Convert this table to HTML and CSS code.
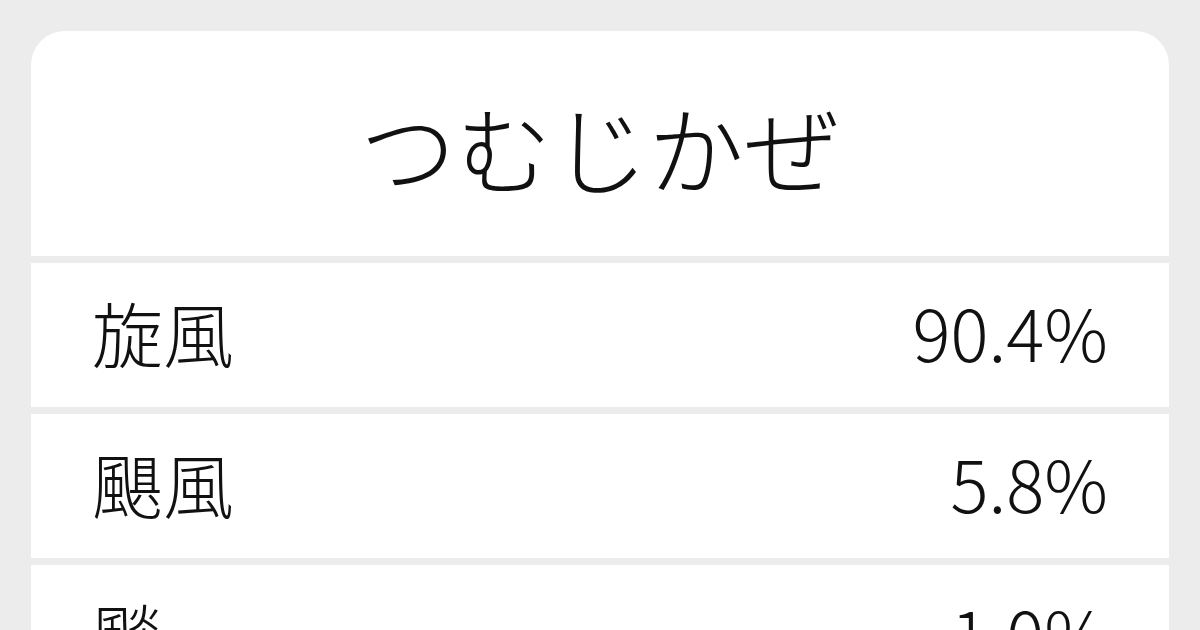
FILE: index.html
```html
<!DOCTYPE html>
<html lang="ja">
<head>
<meta charset="utf-8">
<title>つむじかぜ</title>
<link rel="stylesheet" href="styles.css">
</head>
<body>
<main class="card">
  <header class="title-box">
    <h1 class="title">つむじかぜ</h1>
  </header>
  <div class="row"><span class="word">旋風</span><span class="pct">90.4%</span></div>
  <div class="row"><span class="word">颶風</span><span class="pct">5.8%</span></div>
  <div class="row"><span class="word">颷</span><span class="pct">1.0%</span></div>
</main>
</body>
</html>
```

FILE: styles.css
```css
html, body {
  margin: 0;
  padding: 0;
}
body {
  width: 1200px;
  height: 630px;
  overflow: hidden;
  background: #ececec;
  font-family: "Noto Sans CJK JP", "Noto Sans", sans-serif;
  font-weight: 300;
  color: #111;
  box-sizing: border-box;
  padding: 31px 31px 0;
}
.card {
  display: flex;
  flex-direction: column;
  gap: 7px;
}
.title-box {
  background: #fff;
  border-radius: 34px 34px 0 0;
  height: 225px;
  display: flex;
  align-items: center;
  justify-content: center;
}
.title {
  margin: 0;
  font-size: 96px;
  font-weight: 300;
  line-height: 1;
  padding-top: 4px;
}
.row {
  background: #fff;
  height: 144px;
  box-sizing: border-box;
  flex: none;
  display: flex;
  align-items: center;
  justify-content: space-between;
  padding: 0 61px 8px;
  font-size: 71px;
  line-height: 1;
}
```
